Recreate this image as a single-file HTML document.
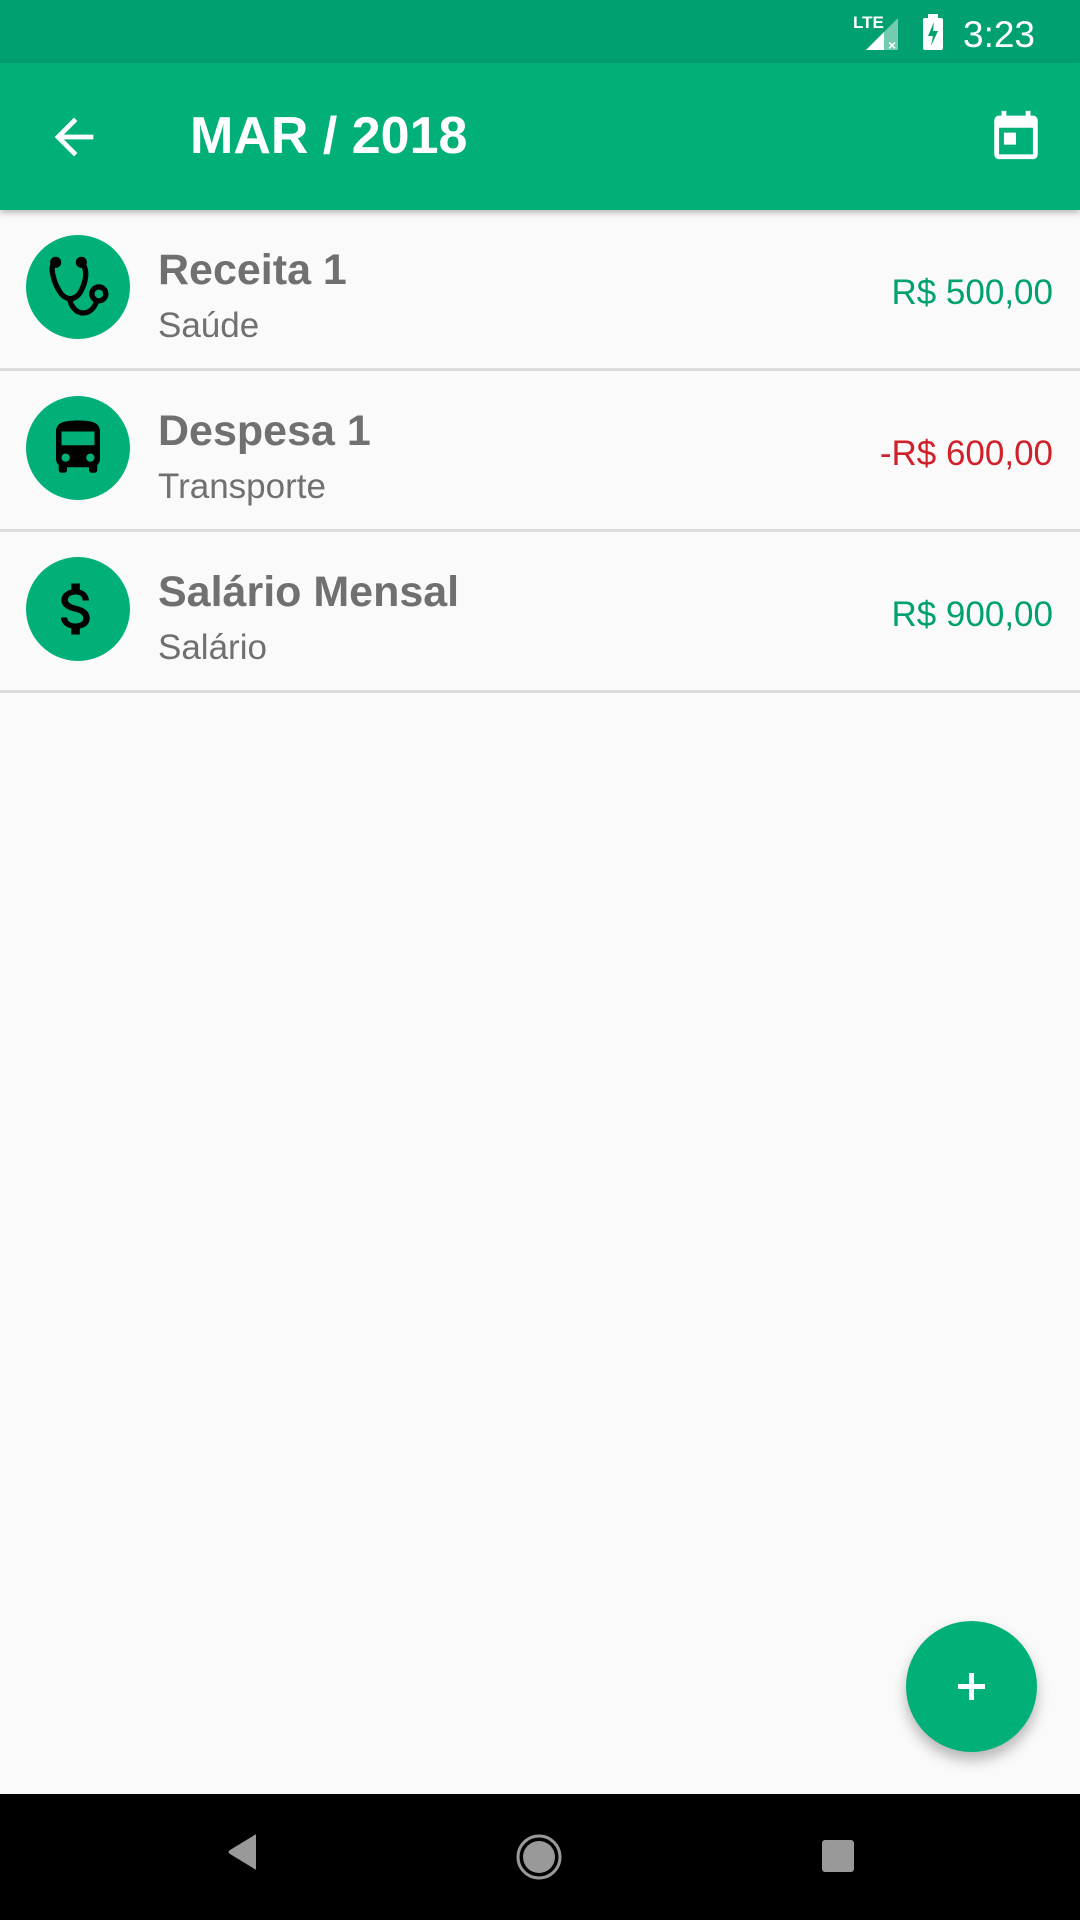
<!DOCTYPE html>
<html><head><meta charset="utf-8"><style>
*{margin:0;padding:0;box-sizing:border-box}
body{width:1080px;height:1920px;background:#fafafa;font-family:"Liberation Sans",sans-serif;position:relative;overflow:hidden}
.sb{position:absolute;top:0;left:0;width:1080px;height:63px;background:#00a070}
.tb{position:absolute;top:63px;left:0;width:1080px;height:147px;background:#00b078;box-shadow:0 3px 6px rgba(0,0,0,.25);z-index:2}
.title{position:absolute;left:190px;top:43px;font-size:52px;font-weight:bold;color:#fff}
.row{position:absolute;left:0;width:1080px;height:161px;border-bottom:3px solid #dcdcdc}
.ic{position:absolute;left:26px;top:25px;width:104px;height:104px;border-radius:50%;background:#00b078}
.ic svg{position:absolute}
.t1{position:absolute;left:158px;top:36px;font-size:43px;font-weight:bold;color:#707070}
.t2{position:absolute;left:158px;top:96px;font-size:35px;color:#707070}
.amt{position:absolute;right:27px;top:63px;font-size:35px}
.g{color:#00a070}.r{color:#d0202a}
.fab{position:absolute;left:906px;top:1621px;width:131px;height:131px;border-radius:50%;background:#00b078;box-shadow:0 8px 14px rgba(0,0,0,.28)}
.nav{position:absolute;top:1794px;left:0;width:1080px;height:126px;background:#000}
</style></head><body>
<div class="sb">
<div style="position:absolute;left:853px;top:13px;color:#fff;font-size:17px;font-weight:bold">LTE</div>
<svg style="position:absolute;left:862px;top:12px" width="42" height="40"><polygon points="4,38 36,6 36,38" fill="#fff" opacity=".45"/><polygon points="4,38 22,20 22,38" fill="#fff"/><text x="26" y="38" fill="#fff" font-size="14" font-weight="bold" font-family="Liberation Sans">×</text></svg>
<svg style="position:absolute;left:921px;top:12px" width="24" height="40"><rect x="2" y="6" width="20" height="32" rx="2" fill="#fff"/><rect x="7" y="2" width="10" height="5" fill="#fff"/><polygon points="13,10 7,24 12,24 10,34 17,19 12,19" fill="#00a070"/></svg>
<div style="position:absolute;left:963px;top:14px;color:#fff;font-size:37px">3:23</div>
</div>
<div class="tb">
<svg style="position:absolute;left:45px;top:45px" width="58" height="58" viewBox="0 0 24 24"><path d="M20 11H7.8l5.6-5.6L12 4l-8 8 8 8 1.4-1.4L7.8 13H20z" fill="#fff"/></svg>
<div class="title">MAR / 2018</div>
<svg style="position:absolute;left:987px;top:43px" width="58" height="58" viewBox="0 0 24 24"><path d="M19 4h-1V2h-2v2H8V2H6v2H5c-1.1 0-2 .9-2 2v14c0 1.1.9 2 2 2h14c1.1 0 2-.9 2-2V6c0-1.1-.9-2-2-2zm0 16H5V9h14v11zM7 11h5v5H7z" fill="#fff"/></svg>
</div>

<div class="row" style="top:210px">
<div class="ic"><svg style="left:18px;top:18px" width="70" height="70" viewBox="0 0 60 60" fill="none" stroke="#000" stroke-width="4.5" stroke-linecap="round"><path d="M10 8 C4 10 8 25 14 34 C20 42 28 40 32 32 C36 24 38 14 32 8"/><path d="M22 40 C26 56 42 54 45 41"/><circle cx="47" cy="35" r="6"/><circle cx="10" cy="8" r="2.5" fill="#000"/><circle cx="32" cy="8" r="2.5" fill="#000"/></svg></div>
<div class="t1">Receita 1</div><div class="t2">Saúde</div><div class="amt g">R$ 500,00</div>
</div>
<div class="row" style="top:371px">
<div class="ic"><svg style="left:19px;top:19px" width="66" height="66" viewBox="0 0 24 24"><path d="M4 16c0 .88.39 1.67 1 2.22V20c0 .55.45 1 1 1h1c.55 0 1-.45 1-1v-1h8v1c0 .55.45 1 1 1h1c.55 0 1-.45 1-1v-1.78c.61-.55 1-1.34 1-2.22V6c0-3.5-3.58-4-8-4s-8 .5-8 4v10zm3.5 1c-.83 0-1.5-.67-1.5-1.5S6.67 14 7.5 14s1.5.67 1.5 1.5S8.330 17 7.5 17zm9 0c-.83 0-1.5-.67-1.5-1.5s.67-1.5 1.5-1.5 1.5.67 1.5 1.5-.67 1.5-1.5 1.5zm1.5-6H6V6h12v5z" fill="#000"/></svg></div>
<div class="t1">Despesa 1</div><div class="t2">Transporte</div><div class="amt r">-R$ 600,00</div>
</div>
<div class="row" style="top:532px">
<div class="ic"><svg style="left:17px;top:18px" width="68" height="68" viewBox="0 0 24 24"><path d="M11.8 10.9c-2.27-.59-3-1.2-3-2.150 0-1.09 1.01-1.85 2.7-1.85 1.78 0 2.44.85 2.5 2.1h2.21c-.07-1.72-1.12-3.3-3.21-3.81V3h-3v2.16c-1.94.42-3.5 1.68-3.5 3.61 0 2.31 1.91 3.46 4.7 4.13 2.5.6 3 1.48 3 2.41 0 .69-.49 1.79-2.7 1.79-2.060 0-2.87-.92-2.98-2.1h-2.2c.12 2.19 1.76 3.42 3.68 3.83V21h3v-2.15c1.95-.37 3.5-1.5 3.5-3.55 0-2.84-2.43-3.810-4.7-4.4z" fill="#000"/></svg></div>
<div class="t1">Salário Mensal</div><div class="t2">Salário</div><div class="amt g">R$ 900,00</div>
</div>

<div class="fab"><div style="position:absolute;left:52px;top:63px;width:27px;height:5px;background:#fff"></div><div style="position:absolute;left:63px;top:52px;width:5px;height:27px;background:#fff"></div></div>

<div class="nav">
<svg style="position:absolute;left:222px;top:38px" width="40" height="40"><path d="M34 3 L34 37 Q33 38 31 36 L8 22 Q5 20 8 18 L31 4 Q33 2 34 3z" fill="#999"/></svg>
<svg style="position:absolute;left:514px;top:38px" width="50" height="50"><circle cx="25" cy="25" r="21" fill="none" stroke="#999" stroke-width="3"/><circle cx="25" cy="25" r="16" fill="#999"/></svg>
<div style="position:absolute;left:822px;top:46px;width:32px;height:32px;border-radius:3px;background:#999"></div>
</div>
</body></html>
